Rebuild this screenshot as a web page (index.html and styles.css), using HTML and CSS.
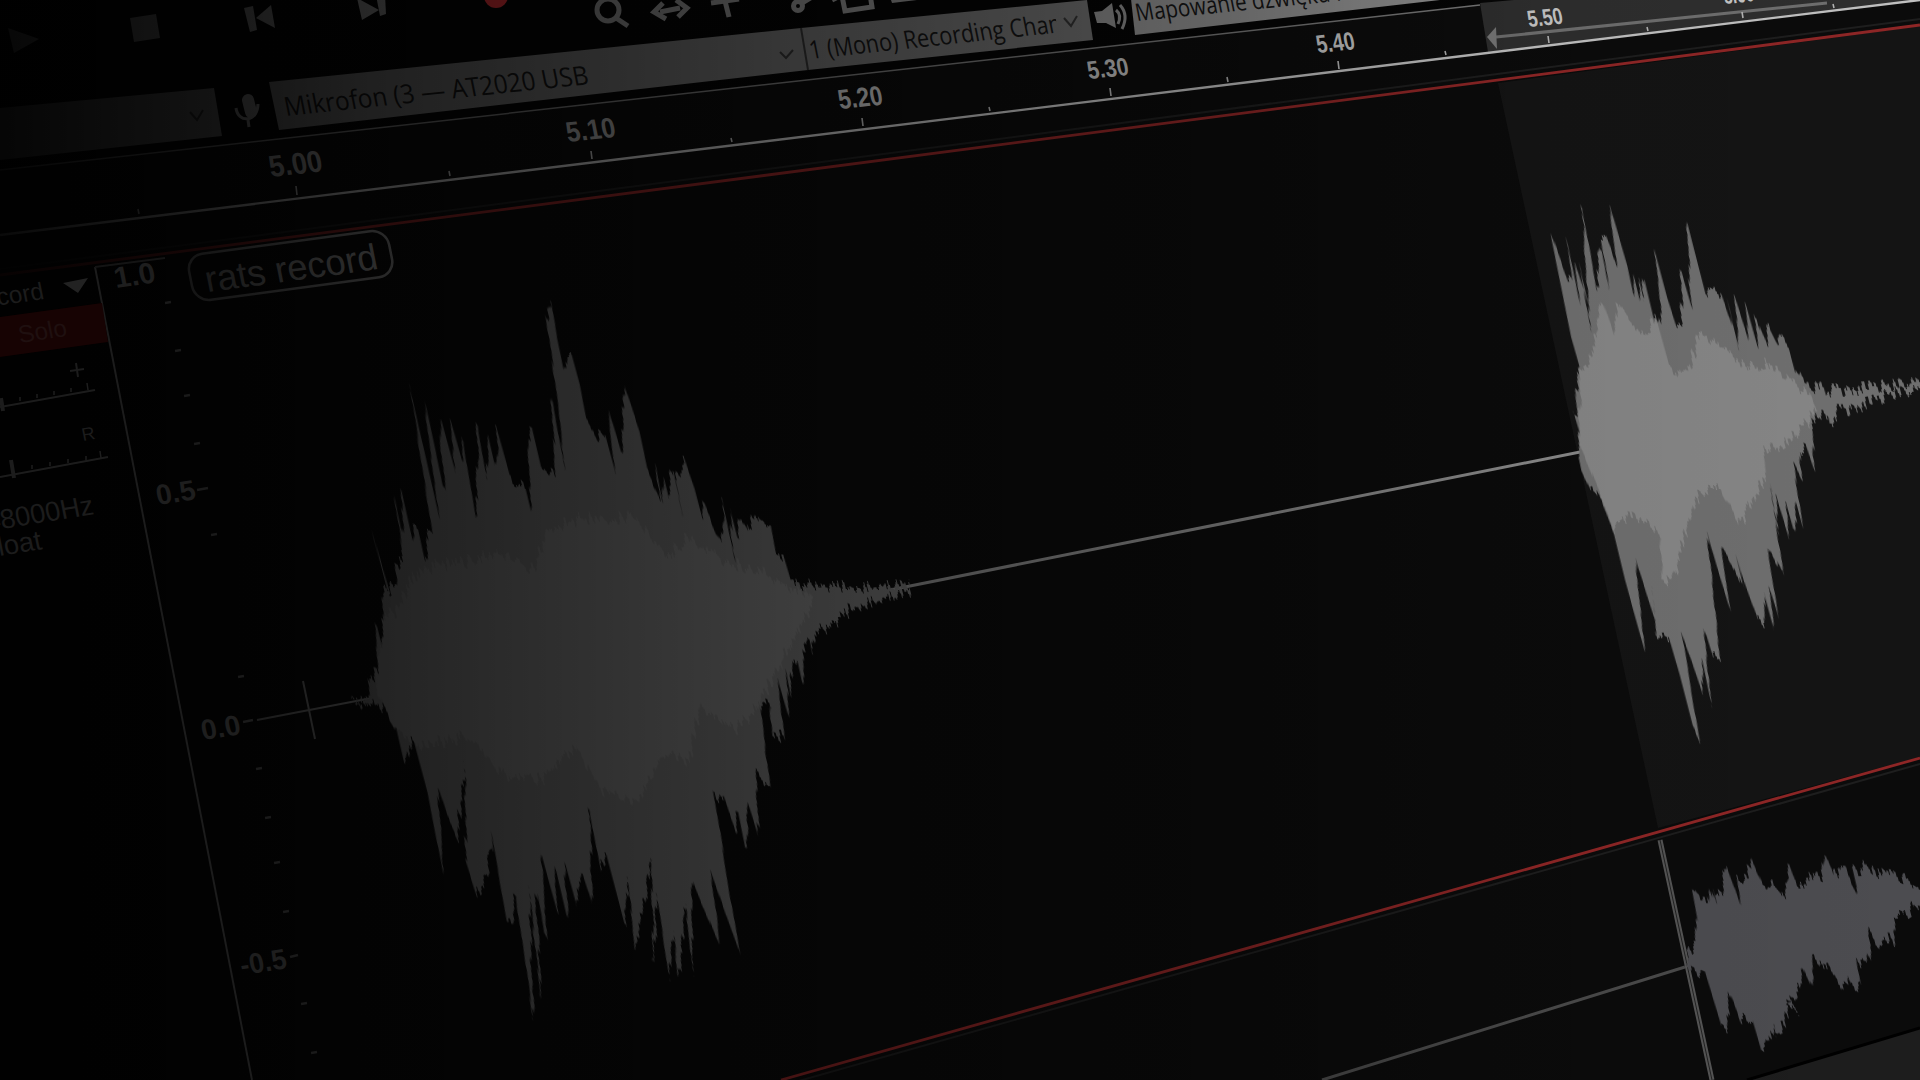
FILE: index.html
```html
<!DOCTYPE html>
<html lang="pl">
<head>
  <meta charset="UTF-8">
  <title>rats record</title>
  <link rel="stylesheet" href="styles.css">
</head>
<body>

  <svg class="scene" viewBox="0 0 1920 1080" width="1920" height="1080">
    <defs>
      <linearGradient id="dim" x1="0" y1="0" x2="1" y2="0">
        <stop offset="0" stop-color="#000" stop-opacity=".95"/>
        <stop offset=".1" stop-color="#000" stop-opacity=".85"/>
        <stop offset=".19" stop-color="#000" stop-opacity=".72"/>
        <stop offset=".32" stop-color="#000" stop-opacity=".6"/>
        <stop offset=".51" stop-color="#000" stop-opacity=".42"/>
        <stop offset=".64" stop-color="#000" stop-opacity=".3"/>
        <stop offset=".8" stop-color="#000" stop-opacity=".05"/>
        <stop offset="1" stop-color="#000" stop-opacity="0"/>
      </linearGradient>
      <clipPath id="mono-clip"><polygon points="801,0 1054,0 1060,60 808,90"/></clipPath>
      <!-- poszarpane slupki probek -->
      <filter id="bars" x="-5%" y="-5%" width="110%" height="110%" color-interpolation-filters="sRGB">
        <feTurbulence type="fractalNoise" baseFrequency=".3 .0015" numOctaves="2" seed="7"/>
        <feColorMatrix values="2.4 0 0 0 -.7  0 1 0 0 0  0 0 1 0 0  0 0 0 0 1" result="noise"/>
        <feDisplacementMap in="SourceGraphic" in2="noise" scale="14" xChannelSelector="A" yChannelSelector="R"/>
        <feOffset dx="7"/>
      </filter>
    </defs>

    <!-- pasek narzedzi -->
    <polygon class="toolbar-bg" points="0,0 1920,0 1920,-40 1480,5 0,170"/>
    <polygon class="ico" points="8,28 39,39 14,53"/>
    <polygon class="ico" points="130,18 156,14 160,38 134,42"/>
    <polygon class="ico" points="244,8 253,6 257,30 250,32"/>
    <polygon class="ico" points="256,18 271,5 275,28"/>
    <polygon class="ico" points="357,-2 362,20 379,10"/>
    <polygon class="ico" points="376,-5 385,-5 386,14 380,16"/>
    <circle class="rec" cx="496" cy="-4" r="12"/>
    <g class="ico-line">
      <circle cx="608" cy="10" r="11"/>
      <line x1="616" y1="18" x2="628" y2="26"/>
      <line x1="660" y1="12" x2="680" y2="8"/>
      <polyline points="663,3 654,12 666,19"/>
      <polyline points="676,0 687,8 678,17"/>
      <line x1="711" y1="3" x2="739" y2="-1"/>
      <line x1="725" y1="1" x2="729" y2="17"/>
      <circle cx="798" cy="6" r="4.5"/>
      <line x1="802" y1="3" x2="812" y2="-3"/>
      <path d="M842,-4 L845,11 L872,7 L870,-6"/>
      <line x1="832" y1="0" x2="840" y2="-4"/>
    </g>
    <polygon class="ico" points="890,-3 917,-5 917,0 892,3"/>

    <!-- mikrofon -->
    <g class="ico-line thin">
      <line x1="248" y1="100" x2="251" y2="112" class="mic-caps"/>
      <path d="M236,108 C238,124 258,122 258,104"/>
      <line x1="248" y1="120" x2="249" y2="127"/>
    </g>
    <polygon class="box" points="0,108 214,88 222,136 0,160"/>
    <polyline class="chevron" points="190,112 197,120 203,110"/>
    <polygon class="box" points="269,82 801,28 808,70 279,130"/>
    <polyline class="chevron" points="780,52 786,58 793,50"/>
    <polygon class="box" points="801,28 1087,0 1093,40 808,70"/>
    <line class="box-sep" x1="801" y1="28" x2="808" y2="70"/>
    <polyline class="chevron" points="1064,18 1071,26 1077,16"/>
    <polygon class="box light" points="1130,-10 1480,-10 1440,0 1135,35"/>

    <text class="box-text" transform="matrix(1 -.105 .2 1 286 116)" font-size="26" textLength="304" lengthAdjust="spacingAndGlyphs">Mikrofon (3 — AT2020 USB</text>
    <g clip-path="url(#mono-clip)">
      <text class="box-text" transform="matrix(1 -.107 .2 1 811 59)" font-size="25" textLength="252" lengthAdjust="spacingAndGlyphs">1 (Mono) Recording Chan</text>
    </g>
    <text class="box-text" transform="matrix(1 -.1 .2 1 1137 21)" font-size="24" textLength="290" lengthAdjust="spacingAndGlyphs">Mapowanie dźwięku na kanały</text>

    <!-- glosnik -->
    <polygon class="ico" points="1094,12 1102,11 1112,3 1116,28 1106,23 1097,23"/>
    <path class="ico-line thin" d="M1116,10 Q1122,15 1118,24"/>
    <path class="ico-line thin" d="M1120,5 Q1129,15 1122,29"/>

    <!-- linijka czasu -->
    <polygon class="ruler-bg" points="0,170 1480,5 1920,-40 1920,0 0,235"/>
    <polygon class="ruler-sel" points="1480,3 1920,-36 1920,0 1488,52"/>
    <line class="loop-line" x1="1496" y1="37" x2="1827" y2="3"/>
    <polygon class="loop-head" points="1496,27 1487,37 1497,49"/>
    <line class="toolbar-line" x1="0" y1="170" x2="1480" y2="5"/>
    <line class="ruler-line" x1="0" y1="235" x2="1920" y2="0"/>

    <g class="ticks">
      <line x1="296" y1="186" x2="297" y2="195"/><line x1="591" y1="151" x2="592" y2="159"/>
      <line x1="862" y1="118" x2="863" y2="126"/><line x1="1110" y1="88" x2="1111" y2="96"/>
      <line x1="1338" y1="61" x2="1339" y2="69"/><line x1="1548" y1="36" x2="1549" y2="43"/>
      <line x1="1742" y1="12" x2="1743" y2="18"/>
      <line x1="138" y1="209" x2="139" y2="214"/><line x1="449" y1="171" x2="450" y2="176"/>
      <line x1="731" y1="138" x2="732" y2="142"/><line x1="989" y1="107" x2="990" y2="111"/>
      <line x1="1227" y1="77" x2="1228" y2="82"/><line x1="1445" y1="51" x2="1446" y2="55"/>
      <line x1="1647" y1="27" x2="1648" y2="31"/><line x1="1833" y1="4" x2="1834" y2="8"/>
    </g>
    <text class="ruler-text faint" transform="matrix(1 -.11 .2 1 271 177)" font-size="30" textLength="53" lengthAdjust="spacingAndGlyphs">5.00</text>
    <text class="ruler-text faint" transform="matrix(1 -.11 .2 1 568 142)" font-size="28" textLength="49" lengthAdjust="spacingAndGlyphs">5.10</text>
    <text class="ruler-text" transform="matrix(1 -.1 .2 1 840 109)" font-size="27" textLength="44" lengthAdjust="spacingAndGlyphs">5.20</text>
    <text class="ruler-text" transform="matrix(1 -.1 .2 1 1089 79)" font-size="25" textLength="41" lengthAdjust="spacingAndGlyphs">5.30</text>
    <text class="ruler-text" transform="matrix(1 -.1 .2 1 1318 53)" font-size="25" textLength="38" lengthAdjust="spacingAndGlyphs">5.40</text>
    <text class="ruler-text" transform="matrix(1 -.1 .2 1 1529 27)" font-size="23" textLength="35" lengthAdjust="spacingAndGlyphs">5.50</text>
    <text class="ruler-text" transform="matrix(1 -.1 .2 1 1725 4)" font-size="22" textLength="30" lengthAdjust="spacingAndGlyphs">5.60</text>

    <!-- zaznaczenie i sciezki -->
    <polygon class="sel" points="1498,83 1920,26 1920,757 1658,828"/>
    <polygon class="below" points="1747,1080 1920,1028 1920,1080"/>
    <line class="below-line" x1="1747" y1="1080" x2="1920" y2="1028"/>
    <line class="dark-line" x1="0" y1="269" x2="1920" y2="19"/>
    <line class="red-line" x1="0" y1="275" x2="1920" y2="25"/>
    <line class="dark-line" x1="781" y1="1086" x2="1920" y2="764"/>
    <line class="red-line" x1="781" y1="1080" x2="1920" y2="758"/>

    <!-- linia zera miedzy fragmentami -->
    <line class="zero" x1="890" y1="590" x2="1590" y2="450"/>
    <line class="zero thin" x1="257" y1="720" x2="372" y2="698"/>
    <line class="zero thin" x1="303" y1="681" x2="315" y2="739"/>
    <line class="zero dim-zero" x1="1322" y1="1080" x2="1685" y2="967"/>

    <!-- fale: szum jest liczony w przestrzeni pochylonej jak slupki na ekranie -->
    <g transform="skewX(14)"><g filter="url(#bars)"><g transform="skewX(-14)">
      <g transform="translate(350,280) scale(.357,.485)">
        <polygon class="wave-outer" points="0,872 55,858 55,825 78,800 70,698 95,770 92,655 108,632 62,520 105,640 130,625 128,595 150,570 125,448 150,535 143,430 178,545 178,510 190,512 210,580 218,528 232,525 168,222 250,490 205,235 265,440 250,272 292,385 283,292 315,375 312,315 352,490 358,300 385,415 390,330 410,395 412,310 450,410 490,425 505,470 500,330 508,300 535,385 575,405 565,240 605,400 552,85 560,35 580,120 600,190 605,145 618,145 640,205 660,280 690,320 715,320 745,400 722,262 760,355 768,218 810,310 835,395 865,445 860,390 880,475 875,395 890,440 905,390 935,500 912,410 935,365 965,430 990,500 992,460 1020,510 1040,540 1045,460 1075,570 1062,465 1085,530 1090,480 1120,520 1135,480 1165,510 1180,510 1195,570 1215,570 1235,620 1275,630 1340,630 1420,635 1568,625 1568,640 1480,660 1400,680 1340,715 1300,730 1295,770 1285,735 1270,760 1270,840 1255,790 1240,780 1235,860 1220,800 1230,905 1200,830 1215,940 1185,945 1175,870 1150,880 1175,1040 1140,1020 1145,1150 1115,1080 1110,1180 1085,1090 1080,1135 1050,1075 1020,1060 1090,1385 1010,1215 1040,1385 960,1240 960,1425 940,1285 920,1445 905,1340 895,1440 860,1270 850,1420 845,1195 800,1390 780,1240 770,1330 720,1190 700,1210 670,1090 680,1290 650,1220 635,1290 600,1195 610,1320 575,1210 580,1300 535,1180 550,1365 520,1250 535,1490 500,1250 515,1535 465,1270 445,1340 430,1280 390,1120 400,1180 365,1250 355,1270 325,1200 320,1000 300,1150 275,1110 245,1040 258,1215 215,1050 175,940 155,1005 130,925 95,880 60,875"/>
        <polygon class="wave-inner soft" points="70,840 95,700 130,680 180,610 230,590 330,580 420,560 510,600 550,520 650,490 800,490 890,570 950,530 1050,580 1150,600 1240,640 1275,640 1300,660 1200,800 1140,880 1080,930 980,880 950,990 880,980 800,1080 700,1050 630,960 540,1030 430,1020 330,940 200,960 130,930"/>
      </g>
    </g></g></g>

    <g transform="skewX(14)"><g filter="url(#bars)"><g transform="skewX(-14)">
      <g transform="translate(1500,180) scale(.3333,.37)">
        <polygon class="wave-outer" points="232,735 238,680 222,632 238,650 226,565 240,510 215,430 150,140 205,275 218,275 198,152 242,345 222,215 265,340 235,215 272,405 262,300 245,70 290,300 298,165 328,300 305,170 322,165 350,230 325,55 380,225 400,310 395,235 415,310 415,260 430,320 432,265 460,370 478,410 480,330 465,195 505,330 530,400 545,370 545,250 580,360 570,285 563,120 620,320 625,290 660,310 662,300 700,400 685,335 720,470 705,320 745,430 730,310 770,440 765,365 800,440 805,390 835,445 840,425 865,450 880,500 910,540 945,575 965,540 975,570 1070,565 1170,555 1290,540 1290,565 1180,575 1120,600 1040,620 1010,625 990,660 985,640 950,640 935,670 945,790 920,725 900,730 905,805 880,760 890,830 905,925 885,860 885,960 860,880 865,960 830,860 835,955 810,815 850,1070 810,1000 800,985 835,1175 810,1105 825,1225 790,1110 795,1205 775,1190 720,1050 705,1000 730,1100 700,1050 660,980 690,1160 655,1060 620,950 660,1295 640,1290 610,1200 635,1420 605,1290 610,1395 575,1300 545,1225 600,1520 580,1480 540,1340 505,1230 470,1240 455,1080 465,1190 405,1020 435,1275 415,1210 375,1080 340,950 310,880 290,850 295,855 270,830 240,770"/>
        <polygon class="wave-inner" points="240,720 240,520 270,500 305,320 340,410 350,340 420,410 470,380 510,510 560,520 600,420 680,460 740,510 800,490 880,550 930,580 950,620 900,680 790,740 800,800 750,880 720,930 660,830 630,830 580,870 530,1050 490,1100 480,960 400,900 340,940 300,850"/>
      </g>
    </g></g></g>

    <!-- dolna sciezka -->
    <line class="clip-line" x1="1660" y1="840" x2="1712" y2="1080"/>
    <line class="clip-core" x1="1660" y1="840" x2="1712" y2="1080"/>
    <g transform="skewX(14)"><g filter="url(#bars)"><g transform="skewX(-14)">
      <g transform="translate(1500,740) scale(.3333)">
        <polygon class="wave-low" points="555,680 570,640 590,620 590,530 572,435 600,475 625,490 622,432 650,490 640,445 665,450 680,380 695,420 720,490 710,410 740,420 755,360 790,440 800,420 830,440 855,470 870,385 890,440 920,440 940,395 970,410 972,335 1000,395 1040,395 1075,460 1060,395 1080,390 1105,375 1120,395 1190,405 1210,415 1260,445 1300,465 1300,470 1260,490 1200,530 1185,550 1180,605 1165,585 1140,620 1110,580 1105,680 1070,660 1080,725 1060,750 1040,710 1030,745 990,690 940,660 940,755 905,680 895,740 860,800 895,815 870,785 855,860 825,875 820,845 800,930 780,915 755,830 720,835 690,760 680,860 665,860 620,715 580,700 565,680"/>
      </g>
    </g></g></g>

    <!-- etykieta klipu -->
    <g transform="matrix(1 -.135 .2 1 186 256)">
      <rect class="pill" width="200" height="46" rx="16"/>
      <text class="pill-text" x="14" y="38" font-size="36">rats record</text>
    </g>

    <!-- przyciemnienie od lewej -->
    <rect width="1920" height="1080" fill="url(#dim)"/>

    <!-- panel sciezki i skala, juz w ciemnych kolorach -->
    <line class="axis" x1="95" y1="267" x2="252" y2="1080"/>
    <line class="axis top-edge" x1="95" y1="267" x2="165" y2="258"/>
    <text class="panel-text" text-anchor="end" transform="matrix(1 -.14 .2 1 45 299)" font-size="24">rats record</text>
    <polygon class="panel-ico" points="63,283 88,278 78,293"/>
    <polygon class="solo" points="0,317 102,303 108,342 0,357"/>
    <text class="solo-text" transform="matrix(1 -.15 .2 1 20 343)" font-size="24">Solo</text>
    <line class="axis" x1="70" y1="371" x2="84" y2="369"/>
    <line class="axis" x1="76" y1="363" x2="78" y2="377"/>
    <line class="axis" x1="0" y1="407" x2="95" y2="390"/>
    <line class="axis" x1="0" y1="477" x2="108" y2="457"/>
    <line class="axis wide" x1="11" y1="460" x2="14" y2="478"/>
    <line class="axis wide" x1="1" y1="398" x2="3" y2="411"/>
    <g class="slider-ticks">
      <line x1="20" y1="401" x2="20" y2="397"/><line x1="37" y1="398" x2="37" y2="394"/>
      <line x1="54" y1="395" x2="54" y2="391"/><line x1="71" y1="392" x2="71" y2="388"/>
      <line x1="88" y1="390" x2="87" y2="383"/>
      <line x1="32" y1="469" x2="32" y2="465"/><line x1="50" y1="466" x2="50" y2="462"/>
      <line x1="68" y1="463" x2="68" y2="459"/><line x1="86" y1="460" x2="86" y2="456"/>
      <line x1="101" y1="458" x2="100" y2="451"/>
    </g>
    <text class="panel-text" transform="matrix(1 -.16 .2 1 83 441)" font-size="18">R</text>
    <text class="panel-text" text-anchor="end" transform="matrix(1 -.16 .2 1 95 514)" font-size="27">48000Hz</text>
    <text class="panel-text" text-anchor="end" transform="matrix(1 -.16 .2 1 43 549)" font-size="27">32-bit float</text>

    <text class="axis-text" transform="matrix(1 -.14 .2 1 116 288)" font-size="29" textLength="41" lengthAdjust="spacingAndGlyphs">1.0</text>
    <text class="axis-text" transform="matrix(1 -.15 .2 1 158 505)" font-size="28" textLength="39" lengthAdjust="spacingAndGlyphs">0.5</text>
    <text class="axis-text" transform="matrix(1 -.15 .2 1 203 740)" font-size="28" textLength="39" lengthAdjust="spacingAndGlyphs">0.0</text>
    <text class="axis-text" transform="matrix(1 -.15 .2 1 242 975)" font-size="28" textLength="46" lengthAdjust="spacingAndGlyphs">-0.5</text>
    <g class="axis-ticks">
      <line x1="165" y1="303" x2="171" y2="302"/><line x1="175" y1="351" x2="181" y2="350"/>
      <line x1="184" y1="396" x2="190" y2="395"/><line x1="194" y1="444" x2="200" y2="443"/>
      <line x1="197" y1="490" x2="208" y2="488"/><line x1="211" y1="535" x2="217" y2="534"/>
      <line x1="238" y1="677" x2="244" y2="676"/><line x1="243" y1="722" x2="253" y2="720"/>
      <line x1="256" y1="769" x2="262" y2="768"/><line x1="265" y1="818" x2="271" y2="817"/>
      <line x1="274" y1="863" x2="280" y2="862"/><line x1="283" y1="912" x2="289" y2="911"/>
      <line x1="290" y1="957" x2="298" y2="955"/><line x1="301" y1="1004" x2="307" y2="1003"/>
      <line x1="311" y1="1053" x2="317" y2="1052"/>
    </g>
  </svg>

</body>
</html>
```

FILE: styles.css
```css
body {
  margin: 0;
  background-color: #050505;
  overflow: hidden;
}

.scene {
  display: block;
  background-color: #0b0b0b;
  font-family: "Liberation Sans", Arial, sans-serif;
}

.toolbar-bg  { fill: #050505; }
.ruler-bg    { fill: #0c0c0c; }
.ruler-sel   { fill: #2e2e2e; }
.sel         { fill: #141414; }
.below       { fill: #1d1d1d; }
.below-line  { stroke: #000; stroke-width: 3; }

.ico         { fill: #8c8c8c; }
.rec         { fill: #e8343a; }
.ico-line    { fill: none; stroke: #8c8c8c; stroke-width: 5; }
.ico-line.thin { stroke-width: 3; }
.mic-caps    { stroke-width: 12; stroke-linecap: round; }

.box         { fill: #707070; }
.box.light   { fill: #8f8f8f; }
.box-sep     { stroke: #333; stroke-width: 2; }
.chevron     { fill: none; stroke: #333; stroke-width: 2; }
.box-text    { font-family: "Open Sans", "Noto Sans", sans-serif; fill: #161616; }

.toolbar-line { stroke: #777; stroke-width: 1.5; }
.ruler-line   { stroke: #c0c0c0; stroke-width: 2.4; }
.loop-line    { stroke: #6e6e6e; stroke-width: 3; }
.loop-head    { fill: #777; }
.ticks line   { stroke: #b4b4b4; stroke-width: 1.6; }
.ruler-text   { fill: #c4c4c4; font-weight: bold; }
.ruler-text.faint { fill: #a0a0a0; }

.red-line   { stroke: #8e2626; stroke-width: 2.8; }
.dark-line  { stroke: #1e1e1e; stroke-width: 2; }

.zero       { stroke: #888; stroke-width: 3; }
.zero.thin  { stroke-width: 2; }
.dim-zero   { stroke: #4a4a4a; }
.clip-line  { stroke: #555; stroke-width: 5; }
.clip-core  { stroke: #222; stroke-width: 1; }

.wave-outer { fill: #6f6f6f; }
.wave-inner { fill: #868686; }
.wave-inner.soft { fill: #7c7c7c; }
.wave-low   { fill: #4c4c50; }

.pill       { fill: none; stroke: #8a8a8a; stroke-width: 2.5; }
.pill-text  { fill: #9a9a9a; }

.axis        { stroke: #1c1c1c; stroke-width: 2; }
.axis.wide   { stroke-width: 4; }
.axis.top-edge { stroke: #141414; }
.axis-text   { fill: #1e1e1e; font-weight: bold; }
.axis-ticks line { stroke: #1a1a1a; stroke-width: 2.5; }
.slider-ticks line { stroke: #1e1e1e; stroke-width: 1.5; }
.panel-text  { fill: #1c1c1c; }
.panel-ico   { fill: #222; }
.solo        { fill: #170303; }
.solo-text   { fill: #1f1010; }
```
